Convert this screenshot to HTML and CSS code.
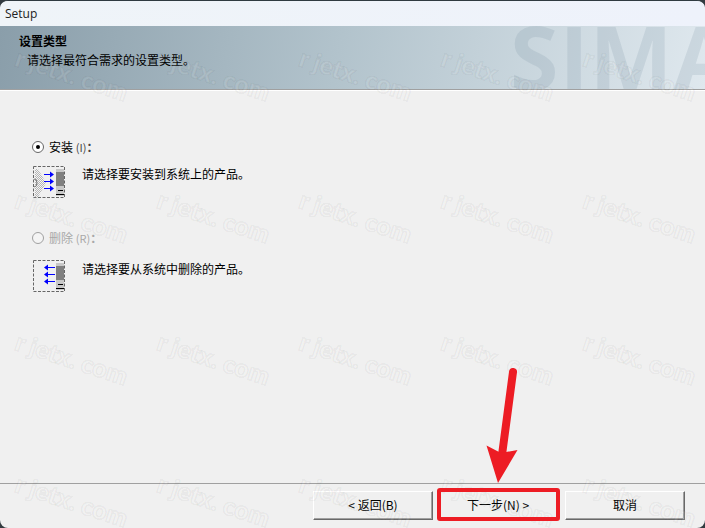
FILE: index.html
```html
<!DOCTYPE html>
<html lang="zh">
<head>
<meta charset="utf-8">
<title>Setup</title>
<link rel="stylesheet" href="styles.css">
</head>
<body>
<div class="window">
  <div class="titlebar">Setup</div>
  <header class="banner">
    <div class="banner-title">设置类型</div>
    <div class="banner-sub">请选择最符合需求的设置类型。</div>
    <div class="brand">SIMATIC</div>
  </header>
  <div class="rule"></div>
  <main class="options">
    <section class="option option-install">
      <label class="radio-row"><span class="radio checked"></span><span>安装 <span class="key">(I)</span><span class="colon">：</span></span></label>
      <div class="desc-row">
        <svg class="setup-icon" width="33" height="33" viewBox="0 0 33 33">
          <defs>
            <pattern id="dither" width="2" height="2" patternUnits="userSpaceOnUse">
              <rect width="2" height="2" fill="#f4f4f4"/>
              <rect width="1" height="1" fill="#b4b4b4"/>
              <rect x="1" y="1" width="1" height="1" fill="#b4b4b4"/>
            </pattern>
          </defs>
          <rect x="0.5" y="0.5" width="31" height="31" fill="none" stroke="#666" stroke-dasharray="3 1.500"/>
          <path d="M2 3h3l8 14-8 14H2z" fill="url(#dither)"/>
          <path d="M1 13a3 4 0 0 1 0 8" fill="none" stroke="#777"/>
          <rect x="23" y="3" width="8" height="27" fill="#c8c8c8"/>
          <rect x="23" y="6" width="8" height="14" fill="#808080"/>
          <rect x="25" y="24" width="5" height="1" fill="#000"/>
          <rect x="23" y="28" width="8" height="1" fill="#000"/>
          <path d="M11 8.500h9M11 15.500h9M11 22.500h9" stroke="#00f" fill="none"/>
          <path d="M17 5.500l4 3-4 3zM17 12.500l4 3-4 3zM17 19.500l4 3-4 3z" fill="#00f"/>
        </svg>
        <span class="desc">请选择要安装到系统上的产品。</span>
      </div>
    </section>
    <section class="option option-remove">
      <label class="radio-row disabled"><span class="radio"></span><span>删除 <span class="key">(R)</span><span class="colon">：</span></span></label>
      <div class="desc-row">
        <svg class="setup-icon" width="33" height="33" viewBox="0 0 33 33">
          <rect x="0.5" y="0.5" width="31" height="31" fill="none" stroke="#666" stroke-dasharray="3 1.500"/>
          <rect x="23" y="3" width="8" height="27" fill="#c8c8c8"/>
          <rect x="23" y="6" width="8" height="14" fill="#808080"/>
          <rect x="25" y="24" width="5" height="1" fill="#000"/>
          <rect x="23" y="28" width="8" height="1" fill="#000"/>
          <path d="M12 7.500h10M12 14.500h10M12 21.500h10" stroke="#00f" fill="none"/>
          <path d="M15 4.500l-4 3 4 3zM15 11.500l-4 3 4 3zM15 18.500l-4 3 4 3z" fill="#00f"/>
        </svg>
        <span class="desc">请选择要从系统中删除的产品。</span>
      </div>
    </section>
  </main>
  <footer class="footer">
    <button class="btn" type="button">&lt; 返回(B)</button>
    <button class="btn btn-next" type="button">下一步(N) &gt;</button>
    <button class="btn" type="button">取消</button>
  </footer>
  <div class="watermarks">
    <span>r jetx. com</span><span>r jetx. com</span><span>r jetx. com</span><span>r jetx. com</span><span>r jetx. com</span>
    <span>r jetx. com</span><span>r jetx. com</span><span>r jetx. com</span><span>r jetx. com</span><span>r jetx. com</span>
    <span>r jetx. com</span><span>r jetx. com</span><span>r jetx. com</span><span>r jetx. com</span><span>r jetx. com</span>
    <span>r jetx. com</span><span>r jetx. com</span><span>r jetx. com</span><span>r jetx. com</span><span>r jetx. com</span>
  </div>
  <svg class="arrow" width="705" height="528" viewBox="0 0 705 528">
    <path d="M513 372L502 455" stroke="#ed1c24" stroke-width="8" stroke-linecap="round" fill="none"/>
    <path d="M486.500 445.500L498 483L517.500 450L501 453z" fill="#ed1c24"/>
    <rect x="439" y="490" width="119" height="29" rx="1" fill="none" stroke="#ed1c24" stroke-width="4"/>
  </svg>
</div>
</body>
</html>
```
FILE: styles.css
```css
* { box-sizing: border-box; }
html, body { margin: 0; height: 100%; background: #333b40; overflow: hidden; }
.window {
  position: relative;
  width: 705px;
  height: 528px;
  display: flex;
  flex-direction: column;
  background: #f0f0f0;
  border-radius: 8px;
  border-top: 1px solid #2f3a40;
  overflow: hidden;
  font-family: "Noto Sans CJK SC", "Liberation Sans", sans-serif;
  font-size: 12px;
  color: #000;
}
.titlebar {
  height: 25px;
  flex: none;
  padding: 5px 0 0 5px;
  background: linear-gradient(90deg, #eff4f8, #eef2fb);
  font-family: "Open Sans", sans-serif;
  line-height: 16px;
  color: #222;
}
.banner {
  position: relative;
  height: 63px;
  flex: none;
  padding: 6px 0 0 19px;
  overflow: hidden;
  background: linear-gradient(100deg, #8a9eaa 0%, #b2c3cc 48%, #dfe8ee 100%);
  line-height: 18px;
}
.banner-title { font-weight: 700; }
.banner-sub { margin: 1px 0 0 8px; }
.brand {
  position: absolute;
  left: 510px;
  top: -30px;
  font-family: "Open Sans", sans-serif;
  font-size: 88px;
  font-weight: 700;
  line-height: 120px;
  letter-spacing: 1px;
  white-space: nowrap;
  color: rgba(90, 120, 140, 0.14);
}
.rule { height: 2px; flex: none; border-top: 1px solid #a0a0a0; border-bottom: 1px solid #fff; }
.options { flex: 1; padding: 47px 0 0 32px; display: flex; flex-direction: column; gap: 30px; }
.radio-row { display: flex; align-items: center; gap: 5px; height: 18px; line-height: 18px; }
.radio-row.disabled { color: #a8a8a8; }
.key { color: #444; font-size: 11px; }
.colon { font-family: "Noto Sans CJK TC", sans-serif; font-weight: 700; color: #444; }
.disabled .key, .disabled .colon { color: #a8a8a8; }
.radio {
  position: relative;
  width: 12px;
  height: 12px;
  border: 1px solid #666;
  border-radius: 50%;
  background: #fff;
}
.disabled .radio { border-color: #a0a0a0; background: #f4f4f4; }
.radio.checked::after {
  content: "";
  position: absolute;
  left: 3px;
  top: 3px;
  width: 4px;
  height: 4px;
  border-radius: 50%;
  background: #000;
}
.desc-row { display: flex; gap: 16px; margin: 10px 0 0 1px; }
.option-remove .desc-row { margin-top: 13px; }
.setup-icon { flex: none; }
.desc { line-height: 18px; }
.option-install .desc { margin-top: -1px; }
.footer {
  height: 45px;
  flex: none;
  display: flex;
  align-items: flex-start;
  gap: 5px;
  padding: 7px 0 0 313px;
  border-top: 1px solid #a0a0a0;
}
.btn {
  width: 120px;
  height: 29px;
  padding: 0 0 3px;
  background: #f0f0f0;
  border: 1px solid;
  border-color: #fff #696969 #696969 #fff;
  box-shadow: inset -1px -1px 0 #a0a0a0;
  font: inherit;
  color: #000;
}
.btn-next + .btn { margin-left: 2px; }
.watermarks {
  position: absolute;
  left: 1px;
  top: 2px;
  display: grid;
  grid-template-columns: repeat(5, 142px);
  grid-auto-rows: 142px;
  pointer-events: none;
}
.watermarks span {
  display: flex;
  align-items: center;
  justify-content: center;
  white-space: nowrap;
  transform: rotate(18deg);
  font-family: "Lato", sans-serif;
  font-size: 25px;
  font-weight: 900;
  color: rgba(255, 255, 255, 0.1);
  -webkit-text-stroke: 2px rgba(0, 0, 0, 0.035);
}
.arrow { position: absolute; left: 0; top: -1px; pointer-events: none; }
```
